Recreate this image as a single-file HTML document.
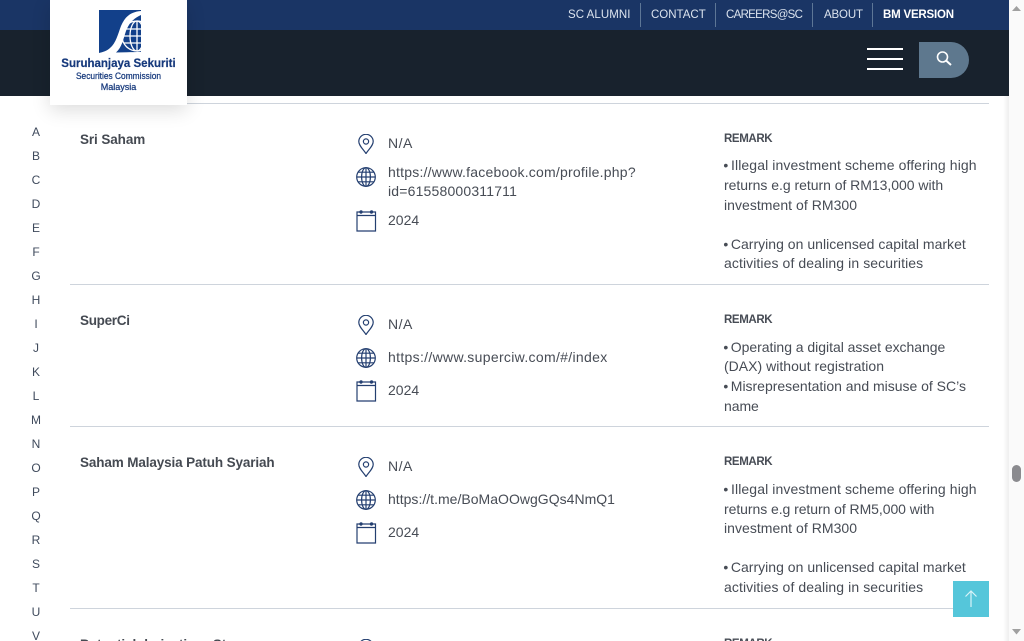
<!DOCTYPE html>
<html><head><meta charset="utf-8"><title>SC</title>
<style>
html,body{margin:0;padding:0;width:1024px;height:641px;overflow:hidden;background:#fff;font-family:"Liberation Sans",sans-serif;color:#444b54}
#w{position:relative;width:1024px;height:641px;overflow:hidden;background:#fff}
.t{position:absolute;white-space:nowrap;font-size:14px;line-height:20px;color:#474c55}
.t i{font-style:normal;margin-right:-2px;position:relative;left:-.7px}
.b{font-weight:bold;color:#454a52;font-size:13.5px;margin-top:1px}
.r{font-size:11.5px;font-weight:bold;color:#474c55;letter-spacing:-.38px;margin-top:1px}
.h{position:absolute;left:70px;width:919px;height:1px;background:#ced4dc}
.a{position:absolute;left:26px;width:20px;text-align:center;font-size:12px;line-height:16px;color:#3f4a5c}
.n{position:absolute;top:0;height:30px;line-height:30px;font-size:11.5px;color:#dbe3ee;white-space:nowrap}
.s{position:absolute;top:3px;width:1px;height:24px;background:#5d7696}
svg.i{position:absolute;fill:none;stroke:#243f70;stroke-width:1.2}
</style></head><body><div id="w">

<div style="position:absolute;left:0;top:30px;width:1009px;height:66px;background:#18222d"></div>
<div style="position:absolute;left:0;top:0;width:1009px;height:30px;background:#1a3565"></div>

<div class="n" style="left:568px;letter-spacing:.05px">SC ALUMNI</div><div class="s" style="left:640px"></div>
<div class="n" style="left:651px">CONTACT</div><div class="s" style="left:715px"></div>
<div class="n" style="left:726px;letter-spacing:-.7px">CAREERS@SC</div><div class="s" style="left:812px"></div>
<div class="n" style="left:824px;letter-spacing:-.15px">ABOUT</div><div class="s" style="left:872px"></div>
<div class="n" style="left:883px;font-weight:bold;color:#fff;letter-spacing:-.2px">BM VERSION</div>

<div style="position:absolute;left:867px;top:48px;width:36px;height:2px;background:#fff"></div>
<div style="position:absolute;left:867px;top:58px;width:36px;height:2px;background:#fff"></div>
<div style="position:absolute;left:867px;top:68px;width:36px;height:2px;background:#fff"></div>
<div style="position:absolute;left:919px;top:42px;width:50px;height:36px;background:#5e788e;border-radius:0 18px 18px 0"></div>
<svg style="position:absolute;left:934px;top:49px" width="20" height="20" viewBox="0 0 20 20" fill="none" stroke="#fff"><circle cx="8.5" cy="8" r="5" stroke-width="1.6"/><path d="M12.3 11.8L17 16" stroke-width="2"/></svg>

<div style="position:absolute;left:50px;top:0;width:137px;height:105px;background:#fff;box-shadow:0 5px 18px rgba(0,0,0,.14);z-index:3">
<svg style="position:absolute;left:49px;top:10px" width="42" height="45" viewBox="0 0 42 45">
<defs><clipPath id="c"><rect width="42" height="44"/></clipPath></defs>
<rect x="0" y="0" width="42" height="44" fill="#12408a"/>
<g clip-path="url(#c)" fill="none" stroke="#fff" stroke-width="1.300">
<circle cx="38" cy="26" r="15"/>
<ellipse cx="38" cy="26" rx="7" ry="15"/>
<path d="M38 11V41M23 26H42M25 19H42M25 33H42"/>
</g>
<path d="M42 1C31 2 26 7 22 16C19 24 17 33 11 38C8 41 4 42 0 43V44H42V42C33 42 25 42.500 17 42.500C23 37 24 30 27 21C30 13 35 8 42 5Z" fill="#fff"/>
<rect x="0" y="44" width="42" height="1" fill="#fff"/>
</svg>
<div style="position:absolute;left:0;width:137px;text-align:center;top:57px;font-size:11.5px;line-height:14px;font-weight:bold;color:#16397c;-webkit-text-stroke:.2px #16397c">Suruhanjaya Sekuriti</div>
<div style="position:absolute;left:0;width:137px;text-align:center;top:71px;font-size:9.5px;line-height:12px;color:#16397c;transform:scaleX(.88);-webkit-text-stroke:.25px #16397c">Securities Commission</div>
<div style="position:absolute;left:0;width:137px;text-align:center;top:82px;font-size:9.5px;line-height:12px;color:#16397c;transform:scaleX(.95);-webkit-text-stroke:.25px #16397c">Malaysia</div>
</div>

<div class="a" style="top:124px">A</div><div class="a" style="top:148px">B</div><div class="a" style="top:172px">C</div><div class="a" style="top:196px">D</div><div class="a" style="top:220px">E</div><div class="a" style="top:244px">F</div><div class="a" style="top:268px">G</div><div class="a" style="top:292px">H</div><div class="a" style="top:316px">I</div><div class="a" style="top:340px">J</div><div class="a" style="top:364px">K</div><div class="a" style="top:388px">L</div><div class="a" style="top:412px">M</div><div class="a" style="top:436px">N</div><div class="a" style="top:460px">O</div><div class="a" style="top:484px">P</div><div class="a" style="top:508px">Q</div><div class="a" style="top:532px">R</div><div class="a" style="top:556px">S</div><div class="a" style="top:580px">T</div><div class="a" style="top:604px">U</div><div class="a" style="top:628px">V</div>

<div class="h" style="top:103px"></div>
<div class="h" style="top:284px"></div>
<div class="h" style="top:426px"></div>
<div class="h" style="top:608px"></div>

<!-- Row 1 -->
<div class="t b" style="left:80px;top:129px;letter-spacing:-.1px">Sri Saham</div>
<svg class="i" style="left:356px;top:134px" width="20" height="20" viewBox="0 0 20 20"><path d="M10 19.500C7 15 2.800 11.500 2.800 7.500a7.200 7.200 0 0 1 14.400 0C17.200 11.500 13 15 10 19.500Z"/><circle cx="10" cy="7.500" r="2.600"/></svg>
<div class="t" style="left:388px;top:133px;letter-spacing:.5px">N/A</div>
<svg class="i" style="left:356px;top:167px" width="20" height="20" viewBox="0 0 20 20"><circle cx="10" cy="10" r="9.300"/><ellipse cx="10" cy="10" rx="4.400" ry="9.300"/><path d="M10 .7V19.300M.7 10H19.300M2.200 5.200H17.800M2.200 14.800H17.800"/></svg>
<div class="t" style="left:388px;top:162px;letter-spacing:.22px">https://www.facebook.com/profile.php?</div>
<div class="t" style="left:388px;top:181px;letter-spacing:.18px">id=61558000311711</div>
<svg class="i" style="left:356px;top:210px" width="21" height="22" viewBox="0 0 21 22"><path d="M1 2H19.500V21H1ZM1 5.500H19.500"/><circle cx="5" cy="2" r="1.100"/><circle cx="15.500" cy="2" r="1.100"/></svg>
<div class="t" style="left:388px;top:210px">2024</div>
<div class="t r" style="left:724px;top:128px">REMARK</div>
<div class="t" style="left:724px;top:155px;letter-spacing:.1px"><i>•</i> Illegal investment scheme offering high</div>
<div class="t" style="left:724px;top:175px;letter-spacing:-.03px">returns e.g return of RM13,000 with</div>
<div class="t" style="left:724px;top:195px;letter-spacing:.04px">investment of RM300</div>
<div class="t" style="left:724px;top:234px;letter-spacing:.02px"><i>•</i> Carrying on unlicensed capital market</div>
<div class="t" style="left:724px;top:253px;letter-spacing:.09px">activities of dealing in securities</div>

<!-- Row 2 -->
<div class="t b" style="left:80px;top:310px;letter-spacing:-.3px">SuperCi</div>
<svg class="i" style="left:356px;top:315px" width="20" height="20" viewBox="0 0 20 20"><path d="M10 19.500C7 15 2.800 11.500 2.800 7.500a7.200 7.200 0 0 1 14.400 0C17.200 11.500 13 15 10 19.500Z"/><circle cx="10" cy="7.500" r="2.600"/></svg>
<div class="t" style="left:388px;top:314px;letter-spacing:.5px">N/A</div>
<svg class="i" style="left:356px;top:348px" width="20" height="20" viewBox="0 0 20 20"><circle cx="10" cy="10" r="9.300"/><ellipse cx="10" cy="10" rx="4.400" ry="9.300"/><path d="M10 .7V19.300M.7 10H19.300M2.200 5.200H17.800M2.200 14.800H17.800"/></svg>
<div class="t" style="left:388px;top:347px;letter-spacing:.32px">https://www.superciw.com/#/index</div>
<svg class="i" style="left:356px;top:380px" width="21" height="22" viewBox="0 0 21 22"><path d="M1 2H19.500V21H1ZM1 5.500H19.500"/><circle cx="5" cy="2" r="1.100"/><circle cx="15.500" cy="2" r="1.100"/></svg>
<div class="t" style="left:388px;top:380px">2024</div>
<div class="t r" style="left:724px;top:309px">REMARK</div>
<div class="t" style="left:724px;top:337px;letter-spacing:-.03px"><i>•</i> Operating a digital asset exchange</div>
<div class="t" style="left:724px;top:356px;letter-spacing:.02px">(DAX) without registration</div>
<div class="t" style="left:724px;top:376px;letter-spacing:-.01px"><i>•</i> Misrepresentation and misuse of SC’s</div>
<div class="t" style="left:724px;top:396px;letter-spacing:-.06px">name</div>

<!-- Row 3 -->
<div class="t b" style="left:80px;top:452px;letter-spacing:-.13px">Saham Malaysia Patuh Syariah</div>
<svg class="i" style="left:356px;top:457px" width="20" height="20" viewBox="0 0 20 20"><path d="M10 19.500C7 15 2.800 11.500 2.800 7.500a7.200 7.200 0 0 1 14.400 0C17.200 11.500 13 15 10 19.500Z"/><circle cx="10" cy="7.500" r="2.600"/></svg>
<div class="t" style="left:388px;top:456px;letter-spacing:.5px">N/A</div>
<svg class="i" style="left:356px;top:490px" width="20" height="20" viewBox="0 0 20 20"><circle cx="10" cy="10" r="9.300"/><ellipse cx="10" cy="10" rx="4.400" ry="9.300"/><path d="M10 .7V19.300M.7 10H19.300M2.200 5.200H17.800M2.200 14.800H17.800"/></svg>
<div class="t" style="left:388px;top:489px;letter-spacing:.02px">https://t.me/BoMaOOwgGQs4NmQ1</div>
<svg class="i" style="left:356px;top:522px" width="21" height="22" viewBox="0 0 21 22"><path d="M1 2H19.500V21H1ZM1 5.500H19.500"/><circle cx="5" cy="2" r="1.100"/><circle cx="15.500" cy="2" r="1.100"/></svg>
<div class="t" style="left:388px;top:522px">2024</div>
<div class="t r" style="left:724px;top:451px">REMARK</div>
<div class="t" style="left:724px;top:479px;letter-spacing:.1px"><i>•</i> Illegal investment scheme offering high</div>
<div class="t" style="left:724px;top:499px;letter-spacing:-.06px">returns e.g return of RM5,000 with</div>
<div class="t" style="left:724px;top:518px;letter-spacing:.04px">investment of RM300</div>
<div class="t" style="left:724px;top:557px;letter-spacing:.02px"><i>•</i> Carrying on unlicensed capital market</div>
<div class="t" style="left:724px;top:577px;letter-spacing:.09px">activities of dealing in securities</div>

<!-- Row 4 partial -->
<div class="t b" style="left:80px;top:634px;letter-spacing:-.1px">Potential derivatives Stoc</div>
<svg class="i" style="left:356px;top:639px" width="20" height="20" viewBox="0 0 20 20"><path d="M10 19.500C7 15 2.800 11.500 2.800 7.500a7.200 7.200 0 0 1 14.400 0C17.200 11.500 13 15 10 19.500Z"/></svg>
<div class="t r" style="left:724px;top:633px">REMARK</div>

<!-- back to top -->
<div style="position:absolute;left:953px;top:581px;width:36px;height:36px;background:#55c6da"></div>
<svg style="position:absolute;left:953px;top:581px" width="36" height="36" viewBox="0 0 36 36" fill="none" stroke="#d8f3f8" stroke-width="1.200"><path d="M18 10V26M12.500 15.500L18 10L23.500 15.500"/></svg>

<!-- scrollbar -->
<div style="position:absolute;left:1003px;top:96px;width:6px;height:545px;background:linear-gradient(to right,#fff,#eee)"></div>
<div style="position:absolute;left:1009px;top:0;width:15px;height:641px;background:#fafafa"></div>
<div style="position:absolute;left:1012px;top:465px;width:9px;height:17px;border-radius:4.500px;background:#8b8b8f"></div>
<svg style="position:absolute;left:1009px;top:0" width="15" height="641" viewBox="0 0 15 641" fill="#a0a0a0"><path d="M3 11L7.500 6L12 11ZM3 629L7.500 634.500L12 629Z"/></svg>

</div></body></html>
